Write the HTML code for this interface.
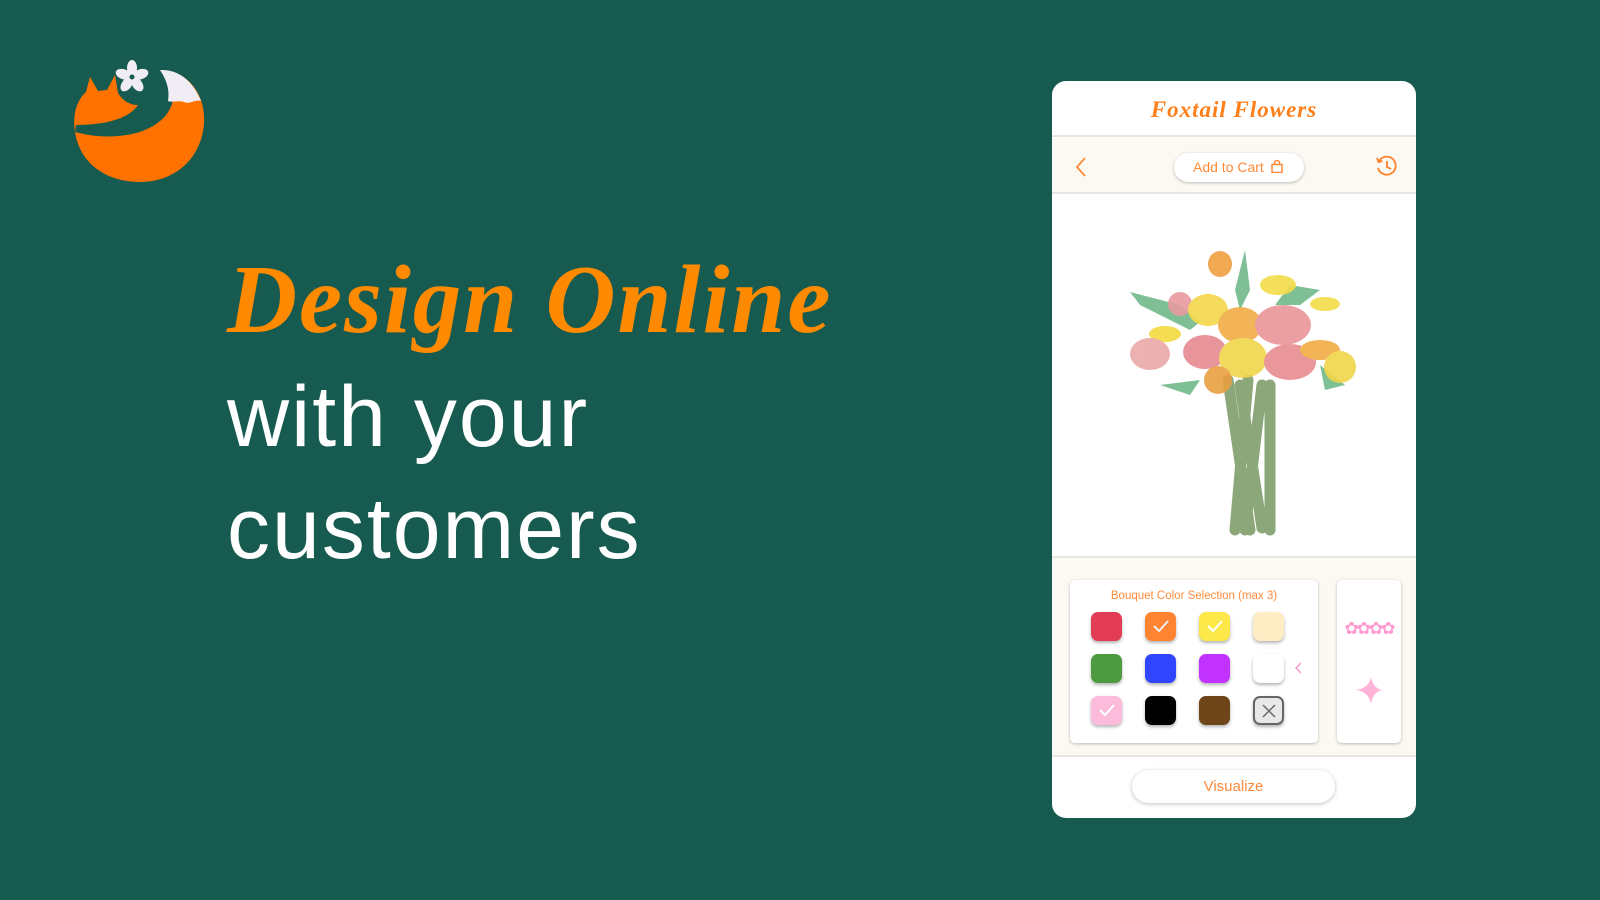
<!DOCTYPE html>
<html><head><meta charset="utf-8"><style>
*{margin:0;padding:0;box-sizing:border-box}
body{width:1600px;height:900px;background:#165a50;position:relative;overflow:hidden;font-family:"Liberation Sans",sans-serif}
.t1{position:absolute;left:227px;top:244px;font-family:"Liberation Serif",serif;font-style:italic;font-weight:bold;font-size:97px;color:#ff8a00;white-space:nowrap;letter-spacing:2px}
.t2{position:absolute;left:227px;font-size:86px;color:#fff;white-space:nowrap;letter-spacing:2px}
.panel{position:absolute;left:1052px;top:81px;width:364px;height:737px;background:#fff;border-radius:14px;overflow:hidden}
.hdr{height:56px;border-bottom:2px solid #e8e6e0;text-align:center;font-family:"Liberation Serif",serif;font-style:italic;font-weight:bold;font-size:23px;color:#ff7f1a;line-height:58px;letter-spacing:1px}
.bar{position:absolute;top:57px;left:0;width:364px;height:56px;background:#fbf9f1;border-bottom:2px solid #e8e6e0}
.cart{position:absolute;left:122px;top:72px;width:130px;height:29px;border-radius:15px;background:#fff;box-shadow:0 1px 3px rgba(0,0,0,.25);color:#ff8a3a;font-size:14px;line-height:29px;padding-left:19px}
.bot{position:absolute;top:475px;left:0;width:364px;height:201px;background:#fbf9f1;border-top:2px solid #e8e6e0;border-bottom:2px solid #e8e6e0}
.card{position:absolute;background:#fff;border-radius:5px;box-shadow:0 1px 3px rgba(0,0,0,.25)}
.sw{position:absolute;width:31px;height:29px;border-radius:7px;box-shadow:0 2px 3px rgba(0,0,0,.3)}
.vis{position:absolute;left:80px;top:689px;width:203px;height:33px;border-radius:17px;background:#fff;box-shadow:0 1px 4px rgba(0,0,0,.25);text-align:center;line-height:33px;color:#ff8a3a;font-size:15px}
</style></head><body>
<svg style="position:absolute;left:68px;top:55px" width="140" height="130" viewBox="0 0 140 130">
<path d="M92 15 C120 15 138 40 136 68 C134 102 108 127 72 127 C40 127 12 110 7 77 C40 86 80 82 98 60 C110 44 108 28 92 15Z" fill="#ff7200"/>
<path d="M92 15 C112 14 126 28 133 46 C126 44 122 50 116 47 C110 45 104 48 100 46 C102 34 98 24 92 15Z" fill="#f0eef4"/>
<path d="M7 77 C4 58 10 44 18 37 L22 22 L30 36 L39 35 L47 20 L50 38 C55 46 62 50 70 50 C62 62 42 70 8 70 Z" fill="#ff7200"/>
<g fill="#f0eef4" transform="translate(64,22)">
<ellipse cx="0" cy="-9" rx="5" ry="8"/>
<ellipse cx="0" cy="-9" rx="5" ry="8" transform="rotate(72)"/>
<ellipse cx="0" cy="-9" rx="5" ry="8" transform="rotate(144)"/>
<ellipse cx="0" cy="-9" rx="5" ry="8" transform="rotate(216)"/>
<ellipse cx="0" cy="-9" rx="5" ry="8" transform="rotate(288)"/>
<circle r="2.5" fill="#165a50"/></g>
</svg>
<div class="t1">Design Online</div>
<div class="t2" style="top:368px">with your</div>
<div class="t2" style="top:480px">customers</div>
<div class="panel">
<div class="hdr">Foxtail Flowers</div>
<div class="bar"></div>
<svg style="position:absolute;left:22px;top:75px" width="14" height="22"><path d="M11 2 L3 11 L11 20" stroke="#ff8a3a" stroke-width="1.8" fill="none"/></svg>
<div class="cart">Add to Cart <svg width="12" height="13" style="vertical-align:-1px;margin-left:3px"><rect x="1" y="4.5" width="10" height="8" fill="none" stroke="#ff8a3a" stroke-width="1.5"/><path d="M3.5 4.5 V3 A2.5 2.5 0 0 1 8.5 3 V4.5" fill="none" stroke="#ff8a3a" stroke-width="1.5"/></svg></div>
<svg style="position:absolute;left:322px;top:73px" width="24" height="24" viewBox="0 0 24 24"><path d="M5 7 A9 9 0 1 1 4 14" fill="none" stroke="#ff7f2a" stroke-width="1.8"/><path d="M3 4 L4.5 8 L8.5 7" fill="none" stroke="#ff7f2a" stroke-width="1.8"/><path d="M13 7 V13 L17 15" fill="none" stroke="#ff7f2a" stroke-width="1.8"/></svg>
<svg style="position:absolute;left:58px;top:158px" width="260" height="300" viewBox="1110 239 260 300">
<g stroke="#8ca87a" stroke-width="11" stroke-linecap="round" fill="none">
<path d="M1228 380 L1250 530"/><path d="M1248 380 L1235 530"/><path d="M1262 385 L1245 530"/><path d="M1270 385 L1270 530"/><path d="M1240 385 L1262 528"/></g>
<g fill="#7fbf95"><path d="M1130 292 L1180 305 L1200 322 L1190 330 L1140 305Z"/><path d="M1245 250 L1250 290 L1240 310 L1235 290Z"/><path d="M1290 285 L1320 290 L1300 305 L1275 305Z"/><path d="M1320 365 L1345 385 L1325 390Z"/><path d="M1160 385 L1200 380 L1190 395Z"/></g>
<g opacity=".9">
<ellipse cx="1220" cy="264" rx="12" ry="13" fill="#f0a040"/>
<ellipse cx="1278" cy="285" rx="18" ry="10" fill="#f3dc4a"/>
<ellipse cx="1180" cy="304" rx="12" ry="12" fill="#e99aa0"/>
<ellipse cx="1208" cy="310" rx="20" ry="16" fill="#f3d84a"/>
<ellipse cx="1165" cy="334" rx="16" ry="8" fill="#f5da40"/>
<ellipse cx="1240" cy="325" rx="22" ry="18" fill="#f2ab45"/>
<ellipse cx="1283" cy="325" rx="28" ry="20" fill="#ea9598"/>
<ellipse cx="1150" cy="354" rx="20" ry="16" fill="#eaa8a8"/>
<ellipse cx="1205" cy="352" rx="22" ry="17" fill="#e58a90"/>
<ellipse cx="1243" cy="358" rx="24" ry="20" fill="#f0d54a"/>
<ellipse cx="1290" cy="362" rx="26" ry="18" fill="#e88c92"/>
<ellipse cx="1320" cy="350" rx="20" ry="10" fill="#f2ab45"/>
<ellipse cx="1340" cy="367" rx="16" ry="16" fill="#f0d54a"/>
<ellipse cx="1218" cy="380" rx="14" ry="14" fill="#e8a040"/>
<ellipse cx="1325" cy="304" rx="15" ry="7" fill="#f3dc4a"/>
</g></svg>
<div class="bot"></div>
<div class="card" style="left:18px;top:499px;width:248px;height:163px"></div>
<div style="position:absolute;left:18px;top:509px;width:248px;text-align:center;color:#ff8a3a;font-size:11.5px">Bouquet Color Selection (max 3)</div>
<div class="sw" style="left:39px;top:531px;background:#e33d55"></div>
<div class="sw" style="left:93px;top:531px;background:#ff8431"></div>
<div class="sw" style="left:147px;top:531px;background:#fde84a"></div>
<div class="sw" style="left:201px;top:531px;background:#fdecc4"></div>
<div class="sw" style="left:39px;top:573px;background:#4e9a40"></div>
<div class="sw" style="left:93px;top:573px;background:#3045ff"></div>
<div class="sw" style="left:147px;top:573px;background:#c132ff"></div>
<div class="sw" style="left:201px;top:573px;background:#fff"></div>
<div class="sw" style="left:39px;top:615px;background:#fdbbdc"></div>
<div class="sw" style="left:93px;top:615px;background:#000"></div>
<div class="sw" style="left:147px;top:615px;background:#6e4518"></div>
<div class="sw" style="left:201px;top:615px;background:#e8e8e8;border:2px solid #666"></div>
<svg style="position:absolute;left:100px;top:537px" width="18" height="16"><path d="M2 8 L7 13 L16 3" stroke="#eee" stroke-width="2" fill="none"/></svg>
<svg style="position:absolute;left:154px;top:537px" width="18" height="16"><path d="M2 8 L7 13 L16 3" stroke="#fff" stroke-width="2" fill="none"/></svg>
<svg style="position:absolute;left:46px;top:621px" width="18" height="16"><path d="M2 8 L7 13 L16 3" stroke="#fff" stroke-width="2" fill="none"/></svg>
<svg style="position:absolute;left:209px;top:622px" width="16" height="16"><path d="M2 2 L14 14 M14 2 L2 14" stroke="#666" stroke-width="1.5"/></svg>
<svg style="position:absolute;left:242px;top:580px" width="10" height="14"><path d="M7 2 L2 7 L7 12" stroke="#f7a0cc" stroke-width="1.5" fill="none"/></svg>
<div class="card" style="left:285px;top:499px;width:64px;height:163px"></div>
<div style="position:absolute;left:285px;width:64px;text-align:center;top:538px;color:#ff9ad0;font-size:17px;letter-spacing:-2px">✿✿✿✿</div>
<svg style="position:absolute;left:302px;top:595px" width="30" height="30" viewBox="0 0 30 30"><path d="M17 1 Q19 12 28 14 Q19 16 17 28 Q15 16 2 14 Q15 12 17 1Z" fill="#ffb3d6"/></svg>
<div class="vis">Visualize</div>
</div>
</body></html>
